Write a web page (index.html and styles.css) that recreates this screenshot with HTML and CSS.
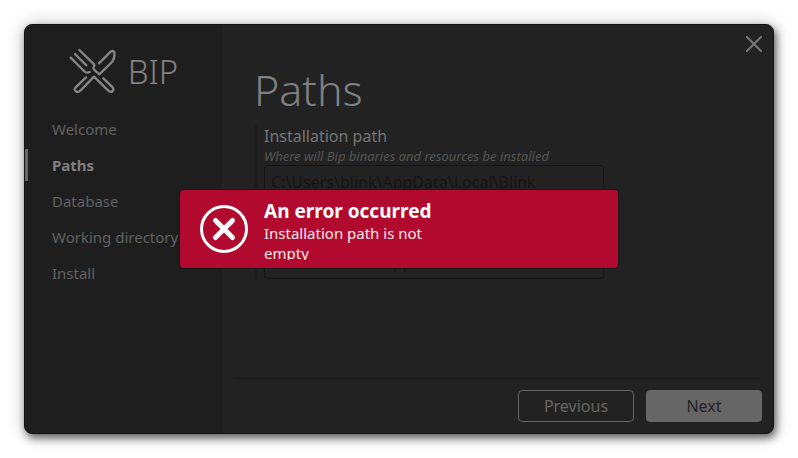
FILE: index.html
```html
<!DOCTYPE html>
<html lang="en">
<head>
<meta charset="utf-8">
<title>BIP Installer</title>
<link rel="stylesheet" href="styles.css">
</head>
<body>
<div class="window">
  <aside class="sidebar">
    <div class="brand">
      <svg class="brand-icon" viewBox="207 144 144 138" aria-hidden="true">
        <path d="M238 150 280 191Q285 196 281 201Q278 205 282 209L298 223 336 186Q345 173 343 157Q340 150 332 155L297 190"/>
        <path d="M225 162 259 196M212 173 252 213Q260 221 269 216"/>
        <path d="M258 232 227 262Q221 269 228 274Q235 279 242 271L282 230 324 271Q331 279 338 273Q343 267 336 260L310 235"/>
      </svg>
      <span class="brand-name">BIP</span>
    </div>
    <nav class="steps">
      <a class="step" href="#welcome">Welcome</a>
      <a class="step step-current" href="#paths" aria-current="step">Paths</a>
      <a class="step" href="#database">Database</a>
      <a class="step" href="#working">Working directory</a>
      <a class="step" href="#install">Install</a>
    </nav>
  </aside>
  <main class="main">
    <button class="close" type="button" aria-label="Close">
      <svg class="close-icon" viewBox="0 0 16 16" aria-hidden="true"><path d="M0 0 16 16M16 0 0 16"/></svg>
    </button>
    <section class="page">
      <h1 class="title">Paths</h1>
      <div class="field">
        <label class="label" for="install-path">Installation path</label>
        <p class="hint">Where will Bip binaries and resources be installed</p>
        <input class="input" id="install-path" type="text" value="C:\Users\blink\AppData\Local\Blink">
      </div>
      <div class="field">
        <label class="label" for="data-path">Data path</label>
        <p class="hint">Where will Bip data be stored</p>
        <input class="input" id="data-path" type="text" value="C:\Users\blink\AppData\Local\Blink">
      </div>
    </section>
    <footer class="footer">
      <button class="button" type="button">Previous</button>
      <button class="button button-primary" type="button">Next</button>
    </footer>
  </main>
  <div class="overlay">
    <div class="alert" role="alertdialog" aria-labelledby="alert-title" aria-describedby="alert-text">
      <svg class="alert-icon" viewBox="0 0 48 48" aria-hidden="true">
        <circle cx="24" cy="24" r="22.5"/>
        <path d="M15.5 15.5 32.5 32.5M32.5 15.5 15.5 32.5"/>
      </svg>
      <div class="alert-body">
        <h2 class="alert-title" id="alert-title">An error occurred</h2>
        <p class="alert-text" id="alert-text">Installation path is not empty</p>
      </div>
    </div>
  </div>
</div>
</body>
</html>
```
FILE: styles.css
```css
* {
  box-sizing: border-box;
}

body {
  margin: 0;
  padding: 24px;
  background: #fff;
  color: #666;
  font-family: "Noto Sans", sans-serif;
  font-size: 15px;
  line-height: 20px;
}

h1, h2, p {
  margin: 0;
}

.window {
  position: relative;
  display: flex;
  min-height: calc(100vh - 48px);
  border: 1px solid #141414;
  border-radius: 8px;
  background: #222;
  box-shadow: 2px 4px 8px rgba(0, 0, 0, 0.6), 0 0 20px rgba(0, 0, 0, 0.2);
}

.sidebar {
  flex: 0 0 197px;
  border-radius: 8px 0 0 8px;
  background: #1e1e1e;
}

.brand {
  display: flex;
  align-items: center;
  justify-content: center;
  gap: 11px;
  height: 88px;
  padding-top: 4px;
}

.brand-icon {
  width: 48px;
  height: 46px;
  fill: none;
  stroke: #858585;
  stroke-width: 7;
  stroke-linecap: round;
  stroke-linejoin: round;
}

.brand-name {
  padding-top: 2px;
  color: #808080;
  font-size: 33px;
  font-weight: 300;
  line-height: 40px;
}

.steps {
  display: flex;
  flex-direction: column;
  gap: 4px;
}

.step {
  padding: 6px 0 6px 24px;
  border-left: 3px solid transparent;
  color: #616161;
  text-decoration: none;
  white-space: nowrap;
}

.step-current {
  border-color: #666;
  color: #808080;
  font-weight: 700;
}

.main {
  display: flex;
  flex: 1;
  flex-direction: column;
  min-width: 0;
  padding: 11px 11px 11px 12px;
}

.close {
  align-self: flex-end;
  display: flex;
  padding: 0;
  border: 0;
  background: none;
}

.close-icon {
  width: 16px;
  height: 16px;
  fill: none;
  stroke: #777;
  stroke-width: 2;
}

.page {
  flex: 1;
  padding: 10px 20px;
}

.title {
  color: #808080;
  font-size: 43px;
  font-weight: 300;
  line-height: 56px;
  margin-bottom: 7px;
}

.field {
  display: flex;
  flex-direction: column;
  width: 350px;
  max-width: 100%;
  padding-left: 6px;
  border-left: 4px solid #1e1e1e;
}

.field + .field {
  padding-top: 6px;
}

.label {
  color: #757575;
  font-size: 16px;
  line-height: 22px;
}

.hint {
  color: #555;
  font-size: 13px;
  font-style: italic;
  line-height: 18px;
}

.input {
  width: 100%;
  height: 34px;
  padding: 0 6px;
  border: 1px solid #161616;
  border-radius: 4px;
  background: transparent;
  color: #151515;
  font: inherit;
  font-size: 16px;
}

.footer {
  display: flex;
  justify-content: flex-end;
  gap: 12px;
  padding-top: 11px;
  border-top: 1px solid #1c1c1c;
}

.button {
  width: 116px;
  height: 32px;
  padding: 0;
  border: 1px solid #666;
  border-radius: 4px;
  background: transparent;
  color: #666;
  font: inherit;
  font-size: 16px;
}

.button-primary {
  background: #666;
  color: #222;
}

.overlay {
  position: absolute;
  inset: 0;
  display: flex;
  align-items: center;
  justify-content: center;
}

.alert {
  display: flex;
  align-items: center;
  gap: 16px;
  width: 438px;
  max-width: 100%;
  padding: 8px 20px;
  border-radius: 4px;
  background: #b2092e;
  box-shadow: 0 0 2px rgba(0, 0, 0, 0.6);
  color: #fff;
}

.alert-icon {
  flex: none;
  width: 48px;
  height: 48px;
  fill: none;
  stroke: #fff;
  stroke-width: 3;
  stroke-linecap: round;
}

.alert-icon path {
  stroke-width: 5;
}

.alert-body {
  max-width: 190px;
  max-height: 62px;
  padding-top: 1px;
  overflow: hidden;
}

.alert-title {
  font-size: 19px;
  line-height: 24px;
}

.alert-text {
  color: #fce8ec;
}
```
